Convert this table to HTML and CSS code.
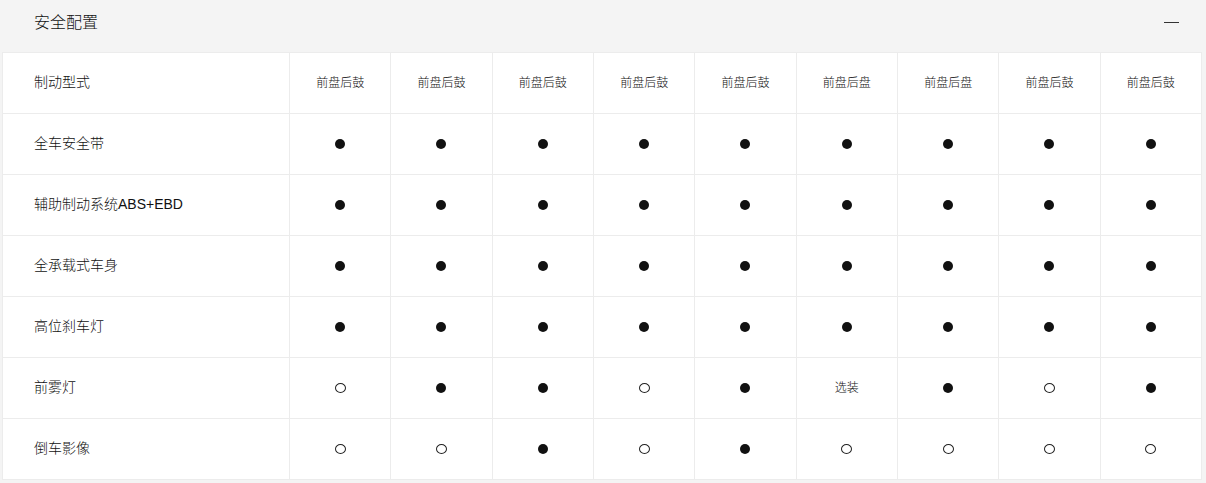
FILE: index.html
```html
<!DOCTYPE html>
<html lang="zh">
<head>
<meta charset="utf-8">
<link rel="stylesheet" href="styles.css">
</head>
<body>
<div class="panel">
  <div class="panel-head">
    <span class="panel-title">安全配置</span>
    <span class="toggle"></span>
  </div>
  <div class="grid">
    <div class="label">制动型式</div>
    <div class="cell txt">前盘后鼓</div><div class="cell txt">前盘后鼓</div><div class="cell txt">前盘后鼓</div><div class="cell txt">前盘后鼓</div><div class="cell txt">前盘后鼓</div><div class="cell txt">前盘后盘</div><div class="cell txt">前盘后盘</div><div class="cell txt">前盘后鼓</div><div class="cell txt">前盘后鼓</div>

    <div class="label">全车安全带</div>
    <div class="cell"><i class="dot"></i></div><div class="cell"><i class="dot"></i></div><div class="cell"><i class="dot"></i></div><div class="cell"><i class="dot"></i></div><div class="cell"><i class="dot"></i></div><div class="cell"><i class="dot"></i></div><div class="cell"><i class="dot"></i></div><div class="cell"><i class="dot"></i></div><div class="cell"><i class="dot"></i></div>

    <div class="label">辅助制动系统ABS+EBD</div>
    <div class="cell"><i class="dot"></i></div><div class="cell"><i class="dot"></i></div><div class="cell"><i class="dot"></i></div><div class="cell"><i class="dot"></i></div><div class="cell"><i class="dot"></i></div><div class="cell"><i class="dot"></i></div><div class="cell"><i class="dot"></i></div><div class="cell"><i class="dot"></i></div><div class="cell"><i class="dot"></i></div>

    <div class="label">全承载式车身</div>
    <div class="cell"><i class="dot"></i></div><div class="cell"><i class="dot"></i></div><div class="cell"><i class="dot"></i></div><div class="cell"><i class="dot"></i></div><div class="cell"><i class="dot"></i></div><div class="cell"><i class="dot"></i></div><div class="cell"><i class="dot"></i></div><div class="cell"><i class="dot"></i></div><div class="cell"><i class="dot"></i></div>

    <div class="label">高位刹车灯</div>
    <div class="cell"><i class="dot"></i></div><div class="cell"><i class="dot"></i></div><div class="cell"><i class="dot"></i></div><div class="cell"><i class="dot"></i></div><div class="cell"><i class="dot"></i></div><div class="cell"><i class="dot"></i></div><div class="cell"><i class="dot"></i></div><div class="cell"><i class="dot"></i></div><div class="cell"><i class="dot"></i></div>

    <div class="label">前雾灯</div>
    <div class="cell"><i class="ring"></i></div><div class="cell"><i class="dot"></i></div><div class="cell"><i class="dot"></i></div><div class="cell"><i class="ring"></i></div><div class="cell"><i class="dot"></i></div><div class="cell txt">选装</div><div class="cell"><i class="dot"></i></div><div class="cell"><i class="ring"></i></div><div class="cell"><i class="dot"></i></div>

    <div class="label">倒车影像</div>
    <div class="cell"><i class="ring"></i></div><div class="cell"><i class="ring"></i></div><div class="cell"><i class="dot"></i></div><div class="cell"><i class="ring"></i></div><div class="cell"><i class="dot"></i></div><div class="cell"><i class="ring"></i></div><div class="cell"><i class="ring"></i></div><div class="cell"><i class="ring"></i></div><div class="cell"><i class="ring"></i></div>
  </div>
</div>
</body>
</html>
```

FILE: styles.css
```css
html, body {
  margin: 0;
  padding: 0;
  background: #f4f4f4;
  font-family: "Liberation Sans", "Noto Sans CJK SC", sans-serif;
  font-weight: 300;
  color: #111;
}
.panel {
  width: 1206px;
}
.panel-head {
  height: 52px;
  display: flex;
  align-items: center;
  justify-content: space-between;
  padding: 0 27px 0 34px;
  box-sizing: border-box;
  background: #f4f4f4;
}
.panel-title {
  font-size: 16px;
  line-height: 1;
  margin-top: -7px;
}
.toggle {
  display: block;
  width: 15px;
  height: 1px;
  background: #333;
  margin-top: -8px;
}
.grid {
  margin-left: 2px;
  width: 1200px;
  box-sizing: border-box;
  display: grid;
  grid-template-columns: 287px repeat(9, 1fr);
  border-left: 1px solid #ececec;
  border-top: 1px solid #ececec;
  background: #fff;
}
.label, .cell {
  height: 61px;
  box-sizing: border-box;
  border-right: 1px solid #ececec;
  border-bottom: 1px solid #ececec;
  display: flex;
  align-items: center;
}
.label {
  padding-left: 31px;
  padding-bottom: 4px;
  font-size: 14px;
}
.cell {
  justify-content: center;
  font-size: 12px;
}
.txt {
  padding-bottom: 3px;
}
.dot {
  display: block;
  width: 10px;
  height: 10px;
  border-radius: 50%;
  background: #111;
  margin-top: -1px;
}
.ring {
  display: block;
  width: 11px;
  height: 10px;
  box-sizing: border-box;
  border-radius: 50%;
  border: 1px solid #222;
  margin-top: -1px;
}
```
